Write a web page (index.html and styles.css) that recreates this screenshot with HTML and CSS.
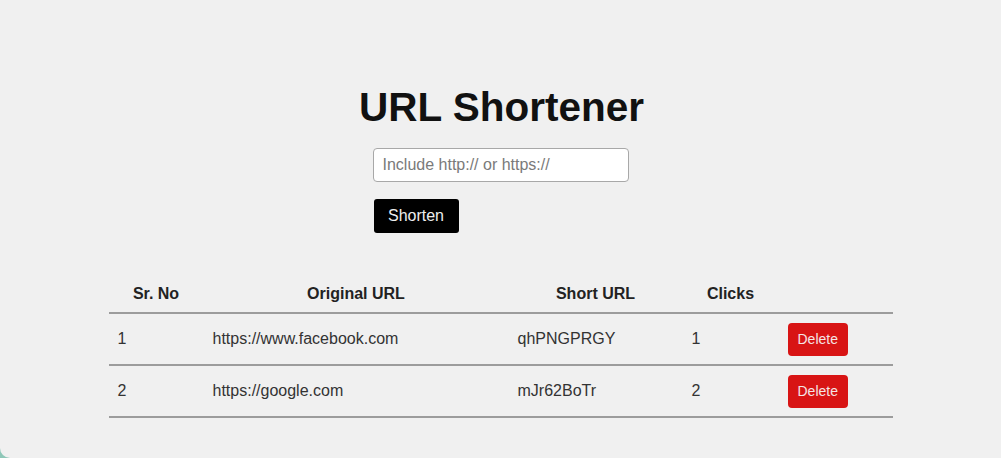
FILE: index.html
```html
<!DOCTYPE html>
<html lang="en">
<head>
<meta charset="utf-8">
<title>URL Shortener</title>
<link rel="stylesheet" href="styles.css">
</head>
<body>
<div class="window">
  <main class="app">
    <h1 class="title">URL Shortener</h1>
    <form class="form">
      <input class="url-input" type="text" placeholder="Include http:// or https://">
      <button class="btn-shorten" type="button">Shorten</button>
    </form>
    <table class="links">
      <colgroup>
        <col class="c1"><col class="c2"><col class="c3"><col class="c4"><col class="c5">
      </colgroup>
      <thead>
        <tr><th>Sr. No</th><th>Original URL</th><th>Short URL</th><th>Clicks</th><th></th></tr>
      </thead>
      <tbody>
        <tr><td>1</td><td>https://www.facebook.com</td><td>qhPNGPRGY</td><td>1</td><td><button class="btn-delete" type="button">Delete</button></td></tr>
        <tr><td>2</td><td>https://google.com</td><td>mJr62BoTr</td><td>2</td><td><button class="btn-delete" type="button">Delete</button></td></tr>
      </tbody>
    </table>
  </main>
</div>
</body>
</html>
```
FILE: styles.css
```css
html, body {
  margin: 0;
  padding: 0;
  height: 100%;
}
body {
  background: #8ec7b8;
  font-family: "Liberation Sans", Arial, sans-serif;
  overflow: hidden;
}
.window {
  height: 458px;
  background: #f0f0f0;
  border-bottom-left-radius: 10px;
}
.app {
  display: flex;
  flex-direction: column;
  align-items: center;
  padding-top: 84px;
}
.title {
  margin: 0;
  font-size: 40.5px;
  line-height: 46px;
  font-weight: bold;
  color: #111;
  transform: translateX(1px);
}
.form {
  display: flex;
  flex-direction: column;
  align-items: flex-start;
  gap: 17px;
  margin-top: 18px;
  width: 256px;
}
.url-input {
  box-sizing: border-box;
  width: 256px;
  height: 34px;
  border: 1px solid #a8a8a8;
  border-radius: 4px;
  background: #fff;
  padding: 0 9px;
  font-family: "Liberation Sans", Arial, sans-serif;
  font-size: 16px;
  color: #333;
}
.url-input::placeholder {
  color: #7a7a7a;
}
.btn-shorten {
  width: 85px;
  height: 34px;
  padding: 0;
  border: none;
  border-radius: 3px;
  background: #000;
  color: #eee;
  font-family: "Liberation Sans", Arial, sans-serif;
  font-size: 16px;
  margin-left: 1px;
}
.links {
  margin-top: 42px;
  width: 784px;
  border-collapse: collapse;
  table-layout: fixed;
  font-size: 16px;
  color: #333;
}
.c1 { width: 95px; }
.c2 { width: 305px; }
.c3 { width: 174px; }
.c4 { width: 96px; }
.c5 { width: 114px; }
.links tr {
  border-bottom: 2px solid #9c9c9c;
}
.links th {
  padding: 10px 9px 9px;
  font-weight: bold;
  color: #222;
  text-align: center;
  line-height: 18px;
}
.links td {
  padding: 8px 9px;
  text-align: left;
  line-height: 18px;
  height: 34px;
}
.btn-delete {
  height: 33px;
  padding: 0 10px;
  border: none;
  border-radius: 4px;
  background: #d81414;
  color: #f4e4e4;
  font-family: "Liberation Sans", Arial, sans-serif;
  font-size: 14px;
  vertical-align: middle;
}
```
